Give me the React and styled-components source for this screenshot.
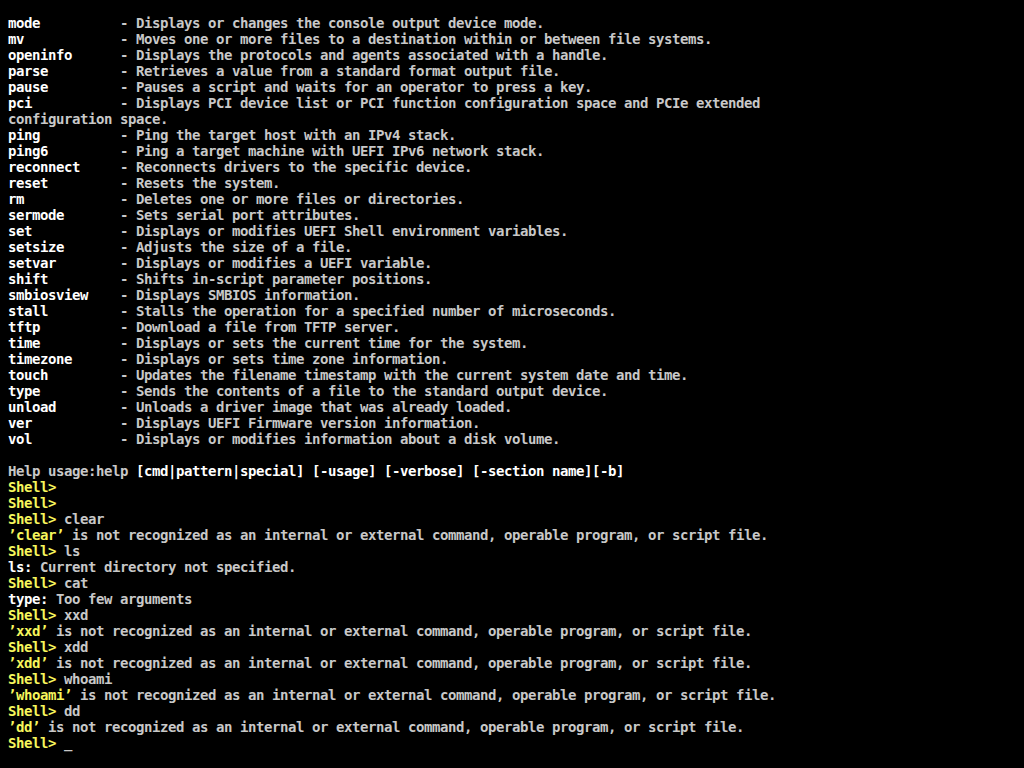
import React from "react";
import styled, { createGlobalStyle } from "styled-components";

const Global = createGlobalStyle`
  html, body {
    margin: 0;
    padding: 0;
    background: #000;
  }
`;

const Screen = styled.div`
  width: 1024px;
  height: 768px;
  box-sizing: border-box;
  padding: 15px 8px 0 8px;
  background: #000;
  overflow: hidden;
  font-family: "DejaVu Sans Mono", "Liberation Mono", monospace;
  font-size: 14px;
  letter-spacing: -0.4287px;
  font-weight: bold;
  color: #c8c8c8;
`;

const Line = styled.div`
  height: 16px;
  line-height: 16px;
  white-space: pre;
`;

const Tone = styled.span`
  color: ${(p) =>
    p.$tone === "white" ? "#ffffff" : p.$tone === "yellow" ? "#f6f65c" : "#c8c8c8"};
`;

const help = [
  ["mode", "Displays or changes the console output device mode."],
  ["mv", "Moves one or more files to a destination within or between file systems."],
  ["openinfo", "Displays the protocols and agents associated with a handle."],
  ["parse", "Retrieves a value from a standard format output file."],
  ["pause", "Pauses a script and waits for an operator to press a key."],
  ["pci", "Displays PCI device list or PCI function configuration space and PCIe extended"],
  [null, "configuration space."],
  ["ping", "Ping the target host with an IPv4 stack."],
  ["ping6", "Ping a target machine with UEFI IPv6 network stack."],
  ["reconnect", "Reconnects drivers to the specific device."],
  ["reset", "Resets the system."],
  ["rm", "Deletes one or more files or directories."],
  ["sermode", "Sets serial port attributes."],
  ["set", "Displays or modifies UEFI Shell environment variables."],
  ["setsize", "Adjusts the size of a file."],
  ["setvar", "Displays or modifies a UEFI variable."],
  ["shift", "Shifts in-script parameter positions."],
  ["smbiosview", "Displays SMBIOS information."],
  ["stall", "Stalls the operation for a specified number of microseconds."],
  ["tftp", "Download a file from TFTP server."],
  ["time", "Displays or sets the current time for the system."],
  ["timezone", "Displays or sets time zone information."],
  ["touch", "Updates the filename timestamp with the current system date and time."],
  ["type", "Sends the contents of a file to the standard output device."],
  ["unload", "Unloads a driver image that was already loaded."],
  ["ver", "Displays UEFI Firmware version information."],
  ["vol", "Displays or modifies information about a disk volume."],
];

const notRecognized = " is not recognized as an internal or external command, operable program, or script file.";

const session = [
  { type: "prompt", cmd: "" },
  { type: "prompt", cmd: "" },
  { type: "prompt", cmd: "clear" },
  { type: "bad", name: "clear" },
  { type: "prompt", cmd: "ls" },
  { type: "err", head: "ls", text: " Current directory not specified." },
  { type: "prompt", cmd: "cat" },
  { type: "err", head: "type", text: " Too few arguments" },
  { type: "prompt", cmd: "xxd" },
  { type: "bad", name: "xxd" },
  { type: "prompt", cmd: "xdd" },
  { type: "bad", name: "xdd" },
  { type: "prompt", cmd: "whoami" },
  { type: "bad", name: "whoami" },
  { type: "prompt", cmd: "dd" },
  { type: "bad", name: "dd" },
  { type: "prompt", cmd: "_" },
];

function HelpRow({ name, desc }) {
  if (name === null) return <Line>{desc}</Line>;
  return (
    <Line>
      <Tone $tone="white">{name.padEnd(14, " ")}</Tone>
      <Tone>{"- " + desc}</Tone>
    </Line>
  );
}

function SessionRow({ item }) {
  if (item.type === "prompt") {
    return (
      <Line>
        <Tone $tone="yellow">Shell&gt;</Tone>
        <Tone>{item.cmd ? " " + item.cmd : ""}</Tone>
      </Line>
    );
  }
  if (item.type === "bad") {
    return (
      <Line>
        <Tone $tone="yellow">{"’" + item.name + "’"}</Tone>
        <Tone>{notRecognized}</Tone>
      </Line>
    );
  }
  return (
    <Line>
      <Tone $tone="white">{item.head + ":"}</Tone>
      <Tone>{item.text}</Tone>
    </Line>
  );
}

export default function App() {
  return (
    <>
      <Global />
      <Screen>
        {help.map(([n, d], i) => (
          <HelpRow key={"h" + i} name={n} desc={d} />
        ))}
        <Line> </Line>
        <Line>
          <Tone>Help usage:help </Tone>
          <Tone $tone="white">[cmd|pattern|special] [-usage] [-verbose] [-section name][-b]</Tone>
        </Line>
        {session.map((item, i) => (
          <SessionRow key={"s" + i} item={item} />
        ))}
      </Screen>
    </>
  );
}
